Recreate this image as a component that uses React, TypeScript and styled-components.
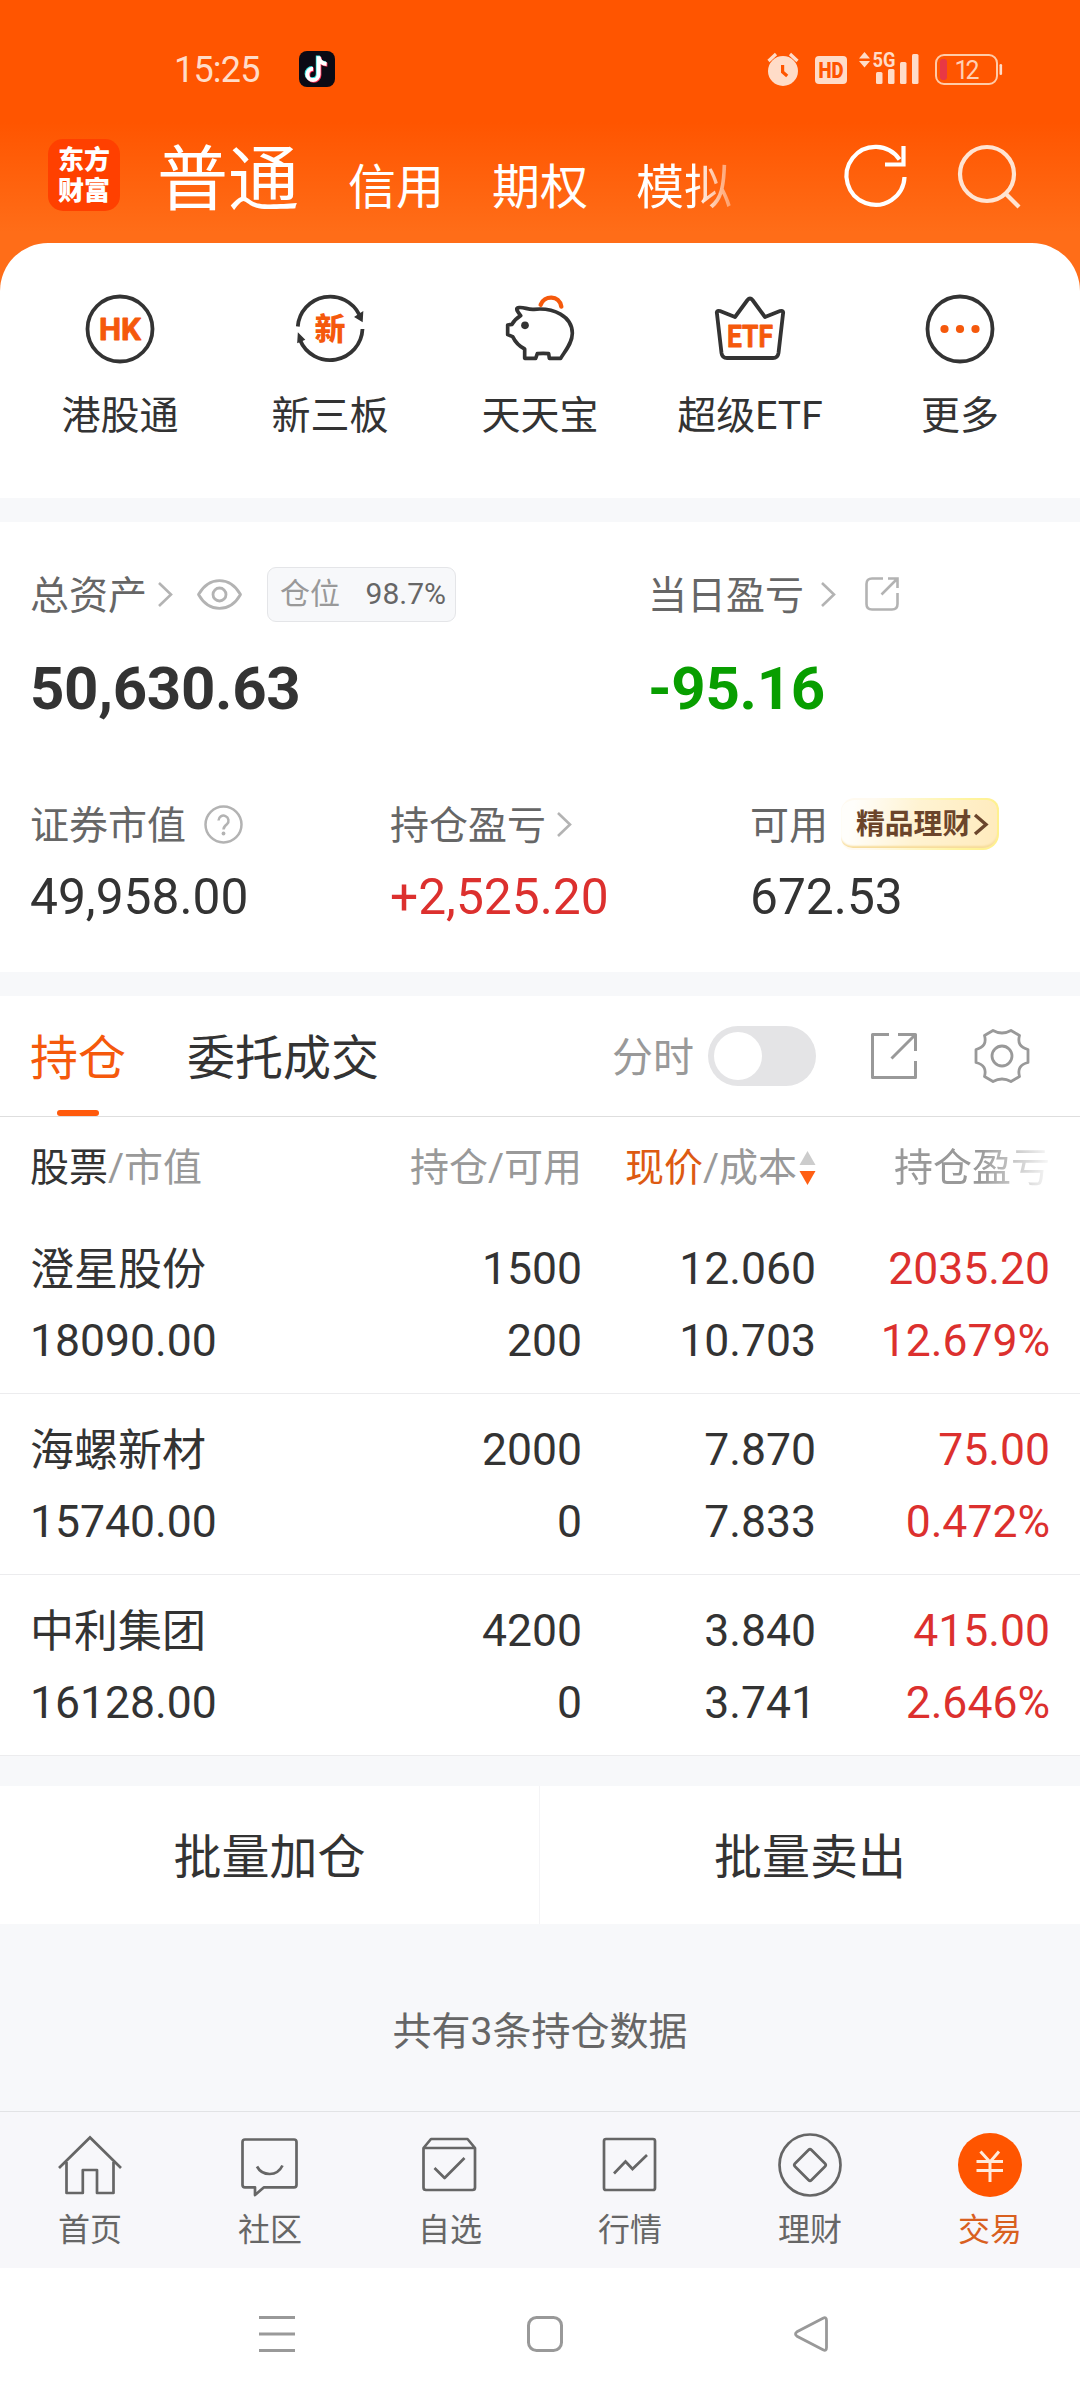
import React from 'react';
import styled, { createGlobalStyle } from 'styled-components';

const FONT = `Roboto, "Noto Sans CJK SC", sans-serif`;
const ORANGE = '#f5590c';
const RED = '#dc302e';
const DARK = '#333333';
const MID = '#666666';
const LIGHT = '#999999';
const PALE = '#b3b3b3';
const BAND = '#f7f8fa';

const GlobalStyle = createGlobalStyle`
  * { box-sizing: border-box; }
  html, body { margin: 0; padding: 0; background: #fff; }
  body { font-family: ${FONT}; color: ${DARK}; }
  svg { display: block; flex: none; overflow: visible; }
  button { font: inherit; border: 0; background: none; padding: 0; margin: 0; color: inherit; }
`;

const Screen = styled.div`
  width: 1080px;
  height: 2400px;
  display: flex;
  flex-direction: column;
  overflow: hidden;
  background: #fff;
`;

/* ---------- header ---------- */

const Hero = styled.header`
  height: 291px;
  flex: none;
  margin-bottom: -48px;
  background: linear-gradient(#ff5500 0, #ff5500 122px, #ff6d18 232px, #ff6d18 100%);
`;

const StatusBar = styled.div`
  height: 138px;
  display: flex;
  align-items: center;
  padding: 0 78px 0 174px;
  color: #ffdcc8;
`;

const Clock = styled.span`
  width: 125px;
  padding-top: 2px;
  font-size: 36px;
  line-height: 42px;
  letter-spacing: -0.8px;
`;

const StatusIcons = styled.div`
  margin-left: auto;
  display: flex;
  align-items: center;
`;

const TitleBar = styled.div`
  height: 74px;
  display: flex;
  align-items: center;
  padding: 0 60px 0 48px;
`;

const Logo = styled.div`
  width: 72px;
  height: 72px;
  flex: none;
  padding-top: 2px;
  border-radius: 15px;
  background: #ff4000;
  color: #fff;
  display: flex;
  flex-direction: column;
  align-items: center;
  justify-content: center;
  font-weight: 900;
  font-size: 26px;
  line-height: 31px;
`;

const AccountTabs = styled.nav`
  width: 580px;
  margin-left: 37px;
  padding-top: 17px;
  display: flex;
  align-items: baseline;
  color: #fff;
  white-space: nowrap;
`;

const AccountTab = styled.button<{ $active?: boolean; $fade?: boolean }>`
  font-size: ${(p) => (p.$active ? 71 : 48)}px;
  line-height: 74px;
  margin-right: ${(p) => (p.$active ? 49 : 48)}px;
  ${(p) =>
    p.$fade &&
    `background: linear-gradient(90deg, #fff 60%, rgba(255,255,255,.35) 100%);
     -webkit-background-clip: text; background-clip: text; color: transparent;`}
`;

const HeaderActions = styled.div`
  margin-left: auto;
  display: flex;
  gap: 51px;
  padding-top: 1px;
`;

/* ---------- shortcuts ---------- */

const Shortcuts = styled.section`
  height: 255px;
  flex: none;
  background: #fff;
  border-radius: 48px 48px 0 0;
  display: grid;
  grid-template-columns: repeat(5, 210px);
  padding: 51px 15px 0;
`;

const Shortcut = styled.button`
  display: flex;
  flex-direction: column;
  align-items: center;
  align-self: start;
  gap: 27px;
  font-size: 39px;
  line-height: 50px;
`;

const Band = styled.div<{ $h: number }>`
  height: ${(p) => p.$h}px;
  flex: none;
  background: ${BAND};
`;

/* ---------- assets ---------- */

const Assets = styled.section`
  height: 450px;
  flex: none;
  padding: 44px 30px 0 30px;
`;

const Totals = styled.div`
  display: grid;
  grid-template-columns: 618px 1fr;
`;

const Breakdown = styled.div`
  display: grid;
  grid-template-columns: 360px 360px 1fr;
  margin-top: 72px;
`;

const Label = styled.div`
  display: flex;
  align-items: center;
  height: 56px;
  font-size: 39px;
  line-height: 56px;
  color: ${MID};
  white-space: nowrap;
`;

const LabelText = styled.span`
  padding-top: 3px;
`;

const Slot = styled.span<{ $ml: number }>`
  margin-left: ${(p) => p.$ml}px;
  display: inline-flex;
`;

const Ratio = styled.span`
  width: 189px;
  height: 55px;
  margin-left: 25px;
  padding: 0 9px 0 12px;
  border: 1px solid #e4e5e8;
  border-radius: 9px;
  background: ${BAND};
  display: flex;
  align-items: center;
  justify-content: space-between;
  font-size: 30px;
  line-height: 50px;
  color: ${MID};

  em { font-style: normal; color: ${LIGHT}; }
`;

const BigFigure = styled.div<{ $color?: string }>`
  margin-top: 32px;
  font-size: 60px;
  font-weight: 700;
  line-height: 70px;
  letter-spacing: -0.3px;
  color: ${(p) => p.$color ?? DARK};
`;

const Figure = styled.div<{ $color?: string }>`
  margin-top: 15px;
  font-size: 49.7px;
  line-height: 60px;
  color: ${(p) => p.$color ?? DARK};
`;

const Promo = styled.span`
  width: 158px;
  height: 52px;
  margin-left: 13px;
  padding-left: 15px;
  display: flex;
  align-items: center;
  gap: 3px;
  border-radius: 14px 12px 16px 12px;
  border: 2px solid transparent;
  border-left: 0;
  background:
    linear-gradient(100deg, #fffefb 8%, #fff3d2 48%, #ffebbd 100%) padding-box,
    linear-gradient(100deg, #fffaf0 20%, #fff4a0 75%, #fff08c 100%) border-box;
  box-shadow: inset 0 -3px 2px -1px #f7dc9a;
  color: #6b452b;
  font-size: 28.8px;
  font-weight: 700;
  line-height: 48px;
`;

/* ---------- positions ---------- */

const TabsBar = styled.div`
  height: 121px;
  flex: none;
  padding: 0 51px 0 30px;
  display: flex;
  border-bottom: 1px solid #dedede;
`;

const Tab = styled.button<{ $active?: boolean }>`
  height: 120px;
  margin-right: 61px;
  display: flex;
  flex-direction: column;
  align-items: center;
  justify-content: space-between;
  font-size: 48px;
  line-height: 126px;
  color: ${(p) => (p.$active ? ORANGE : DARK)};

  &::after {
    content: '';
    flex: none;
    width: 42px;
    height: 6px;
    margin-top: -12px;
    border-radius: 3px;
    background: ${(p) => (p.$active ? '#ff5a0c' : 'transparent')};
  }
`;

const TabTools = styled.div`
  margin-left: auto;
  display: flex;
  align-items: center;
  color: ${LIGHT};
  font-size: 41px;
  line-height: 56px;
`;

const ToolText = styled.span`
  padding-top: 4px;
`;

const Toggle = styled.span`
  width: 108px;
  height: 60px;
  margin: 0 55px 0 14px;
  padding: 6px;
  border-radius: 30px;
  background: #e4e4e6;

  &::before {
    content: '';
    display: block;
    width: 48px;
    height: 48px;
    border-radius: 50%;
    background: #fff;
  }
`;

const COLUMNS = '334px 218px 234px 1fr';

const HeadRow = styled.div`
  height: 96px;
  flex: none;
  padding: 3px 30px 0 30px;
  display: grid;
  grid-template-columns: ${COLUMNS};
  align-items: center;
  font-size: 39px;
  line-height: 96px;
  color: ${LIGHT};
  white-space: nowrap;
`;

const HeadCell = styled.div<{ $right?: boolean }>`
  display: flex;
  align-items: center;
  justify-content: ${(p) => (p.$right ? 'flex-end' : 'flex-start')};
`;

const Ink = styled.span<{ $c: string }>`
  color: ${(p) => p.$c};
`;

const FadingHead = styled(HeadCell)`
  padding-left: 78px;
  mask-image: linear-gradient(90deg, #000 0, #000 70%, transparent 102%);
`;

const Row = styled.div`
  height: 181px;
  flex: none;
  padding: 20px 30px 0 30px;
  display: grid;
  grid-template-columns: ${COLUMNS};
  grid-template-rows: 72px 72px;
  border-bottom: 1px solid #ececee;
  font-size: 44.5px;
  line-height: 73px;
`;

const Cell = styled.div<{ $right?: boolean; $color?: string }>`
  text-align: ${(p) => (p.$right ? 'right' : 'left')};
  color: ${(p) => p.$color ?? DARK};
  white-space: nowrap;
`;

const StockName = styled(Cell)`
  font-size: 44px;
  line-height: 75px;
`;

const BatchBar = styled.div`
  height: 138px;
  flex: none;
  display: grid;
  grid-template-columns: 539px 541px;
`;

const BatchButton = styled.button`
  font-size: 48px;
  line-height: 138px;
  padding-top: 3px;

  & + & { border-left: 1px solid #f4f4f6; }
`;

const Summary = styled.div`
  height: 187px;
  flex: none;
  padding-top: 26px;
  background: ${BAND};
  text-align: center;
  font-size: 39px;
  line-height: 164px;
  color: ${MID};
`;

/* ---------- bottom navigation ---------- */

const BottomNav = styled.nav`
  height: 157px;
  flex: none;
  display: grid;
  grid-template-columns: repeat(6, 180px);
  padding-top: 21px;
  border-top: 1px solid #e2e3e5;
  background: #f7f7fa;
`;

const NavItem = styled.button<{ $active?: boolean }>`
  display: flex;
  flex-direction: column;
  align-items: center;
  align-self: start;
  gap: 12px;
  font-size: 32px;
  line-height: 42px;
  color: ${(p) => (p.$active ? '#d9601f' : MID)};
`;

const SystemNav = styled.div`
  height: 132px;
  flex: none;
  padding: 0 252px 0 259px;
  display: flex;
  align-items: center;
  justify-content: space-between;
`;

/* ---------- drawings ---------- */

const TikTok = () => (
  <svg width="36" height="36" viewBox="0 0 36 36">
    <rect width="36" height="36" rx="8" fill="#0b0a14" />
    <g fill="none" strokeWidth="4">
      <path d="M18.800 4.500v18.200a5.600 5.600 0 1 1-5.600-5.600M18.800 5c.6 4.200 3.600 7 8 7.200" stroke="#35e6e0" />
      <path d="M20.400 6v18.200a5.600 5.600 0 1 1-5.600-5.600M20.400 6.500c.6 4.200 3.600 7 8 7.200" stroke="#ff2c56" />
      <path d="M19.600 5.200v18.200a5.600 5.600 0 1 1-5.600-5.600M19.600 5.700c.6 4.200 3.600 7 8 7.200" stroke="#fff" />
    </g>
  </svg>
);

const StatusGlyphs = () => (
  <svg width="236" height="36" viewBox="766 50 236 36">
    <g fill="#ffdcc8">
      <circle cx="783" cy="70" r="15" />
      <path d="M768.500 60l7.500-7M797.500 60l-7.500-7" stroke="#ffdcc8" strokeWidth="3.200" />
      <path d="M782.600 64v7l4.600 4" stroke="#ff5500" strokeWidth="3.200" fill="none" />
      <rect x="815" y="55" width="32" height="28" rx="4" />
      <text x="831" y="77" fontSize="22.500" fontWeight="900" fill="#ff5500" textAnchor="middle" textLength="25" lengthAdjust="spacingAndGlyphs">HD</text>
      <path d="M864.500 51l5.500 6.500h-11zM864.500 66.500l5.500-6.500h-11z" />
      <text x="872.500" y="66" fontSize="20.500" fontWeight="700" textLength="23" lengthAdjust="spacingAndGlyphs">5G</text>
      <rect x="876" y="71" width="6.500" height="12" rx="1.500" />
      <rect x="888" y="68" width="6.500" height="15" rx="1.500" />
      <rect x="900" y="61" width="6.500" height="22" rx="1.500" />
      <rect x="912" y="53" width="6.500" height="30" rx="1.500" />
      <rect x="999.500" y="63" width="2.600" height="11" rx="1.300" />
      <text x="967" y="78" fontSize="25" textAnchor="middle" textLength="25" fill="#ffcfb4">12</text>
    </g>
    <rect x="936" y="54" width="61" height="29" rx="8" fill="none" stroke="#ffcba8" strokeWidth="2" />
    <rect x="940" y="58" width="7" height="21" rx="3" fill="#e83845" />
  </svg>
);

const RefreshIcon = () => (
  <svg width="62" height="64" viewBox="0 0 62 64" fill="none" stroke="#fff" strokeWidth="4.200">
    <path d="M59.500 33a29 29 0 1 1-5-17.500" />
    <path d="M58.500 2v18.500H40" />
  </svg>
);

const SearchIcon = () => (
  <svg width="62" height="64" viewBox="0 0 62 64" fill="none" stroke="#ffe4d2" strokeWidth="4.200">
    <circle cx="29" cy="30" r="27" />
    <path d="M47 49l14 14" />
  </svg>
);

const roundIcon = { width: 70, height: 70, viewBox: '0 0 70 70', fill: 'none', stroke: DARK, strokeWidth: 3.8 };

const HkIcon = () => (
  <svg {...roundIcon}>
    <circle cx="35" cy="35" r="32.500" />
    <text x="35" y="46.300" fontSize="32" fontWeight="700" fill={ORANGE} stroke={ORANGE} strokeWidth="0.900" strokeLinejoin="round" textAnchor="middle" textLength="42" lengthAdjust="spacingAndGlyphs">HK</text>
  </svg>
);

const NewBoardIcon = () => (
  <svg {...roundIcon}>
    <path d="M2.800 32.500A32.500 32.500 0 0 1 64.500 21" />
    <path d="M67.500 35A32.500 32.500 0 0 1 5 46" />
    <path d="M60.500 23l7-4.500-.5 8.500zM3 48l.5-8 5.500 5.500z" fill={DARK} strokeWidth="1.500" />
    <text x="35" y="46" fontSize="31" fontWeight="900" fill={ORANGE} stroke="none" textAnchor="middle">新</text>
  </svg>
);

const PiggyIcon = () => (
  <svg width="70" height="70" viewBox="45 42 210 210" fill="none" strokeLinejoin="round" strokeLinecap="round">
    <path
      d="M92 107C80 92 76 84 86 83C100 80 115 90 132 88C190 82 247 108 247 160C247 190 225 213 212 235H178L176 221Q160 219 142 221L137 235H104V207Q80 195 68 170L53 164V135L66 133Q74 118 92 107"
      stroke={DARK}
      strokeWidth="11"
    />
    <path d="M152 74C162 46 208 44 214 80" stroke={ORANGE} strokeWidth="13" />
    <circle cx="105" cy="136" r="11.500" fill={DARK} />
  </svg>
);

const EtfIcon = () => (
  <svg {...roundIcon} strokeLinejoin="round">
    <path d="M2 20Q1 16 5 17L20 23 32.500 6Q35 3 37.500 6L50 23 65 17Q69 16 68 20L63.500 59Q62.800 64 58 64H12Q7.200 64 6.500 59Z" />
    <text x="35" y="52.500" fontSize="32" fontWeight="700" fill={ORANGE} stroke={ORANGE} strokeWidth="0.800" textAnchor="middle" textLength="46" lengthAdjust="spacingAndGlyphs">ETF</text>
  </svg>
);

const MoreIcon = () => (
  <svg {...roundIcon}>
    <circle cx="35" cy="35" r="32.500" />
    <g fill={ORANGE} stroke="none">
      <circle cx="19.500" cy="35" r="4.100" />
      <circle cx="35" cy="35" r="4.100" />
      <circle cx="50.500" cy="35" r="4.100" />
    </g>
  </svg>
);

const Chevron = ({ w = 15, h = 25, color = PALE, sw = 2.6 }) => (
  <svg width={w} height={h} viewBox={`0 0 ${w} ${h}`} fill="none" stroke={color} strokeWidth={sw}>
    <path d={`M1 1L${w - 2} ${h / 2}L1 ${h - 1}`} />
  </svg>
);

const EyeIcon = () => (
  <svg width="45" height="31" viewBox="0 0 45 31" fill="none" stroke={PALE} strokeWidth="2.800">
    <path d="M1.500 15.500C12-3 33-3 43.500 15.500C33 34 12 34 1.500 15.500Z" strokeLinejoin="round" />
    <circle cx="22.500" cy="15.500" r="6.500" />
  </svg>
);

const OpenIcon = () => (
  <svg width="34" height="34" viewBox="0 0 34 34" fill="none" stroke={PALE} strokeWidth="2.600">
    <path d="M18 1.500H7Q1.500 1.500 1.500 7V27Q1.500 32.500 7 32.500H27Q32.500 32.500 32.500 27V16" />
    <path d="M23 1.500H32.500V11M16.500 17.500L32 2" />
  </svg>
);

const HelpIcon = () => (
  <svg width="39" height="39" viewBox="0 0 39 39" fill="none" stroke={PALE} strokeWidth="2.500">
    <circle cx="19.500" cy="19.500" r="18" />
    <path d="M14.500 15.500a5 5 0 1 1 8.500 3.700c-2.200 1.800-3.500 2.800-3.500 5.300" />
    <circle cx="19.500" cy="28.500" r="1.900" fill={PALE} stroke="none" />
  </svg>
);

const ExportIcon = () => (
  <svg width="46" height="46" viewBox="0 0 46 46" fill="none" stroke={LIGHT} strokeWidth="3" strokeLinejoin="round">
    <path d="M18 1.500H1.500V44.500H44.500V28" />
    <path d="M27 1.500H44.500V18M20.500 25.500L43.500 2.500" />
  </svg>
);

const GearIcon = () => (
  <svg width="54" height="54" viewBox="-27 -27 54 54" fill="none" stroke={LIGHT} strokeWidth="2.800" strokeLinejoin="round">
    <path d="M-9-25.500Q0-20.500 9-25.500L17.500-20.500C15.500-13 18-8.500 26-6.500V6.500C18 8.500 15.500 13 17.500 20.500L9 25.500Q0 20.500-9 25.500L-17.500 20.500C-15.500 13-18 8.500-26 6.500V-6.500C-18-8.500-15.500-13-17.500-20.500Z" />
    <circle r="10" />
  </svg>
);

const SortIcon = () => (
  <svg width="17" height="34" viewBox="0 0 17 34">
    <path d="M8.500 0L16.500 14H0.500Z" fill="#cccccc" />
    <path d="M8.500 34L16.500 20H0.500Z" fill="#ff5f14" />
  </svg>
);

const navIcon = { width: 64, height: 64, viewBox: '0 0 64 64', fill: 'none', stroke: MID, strokeWidth: 2.7 };

const HomeIcon = () => (
  <svg {...navIcon}>
    <path d="M1 35L32 4.500 63 35" />
    <path d="M8.500 29V60H24.800V37H39V60H55.500V29" strokeLinejoin="round" />
  </svg>
);

const ChatIcon = () => (
  <svg {...navIcon} strokeLinejoin="round">
    <path d="M7 6.500H56Q58.500 6.500 58.500 9V52Q58.500 54.300 56 54.300H26L17 62V54.300H7Q4.500 54.300 4.500 52V9Q4.500 6.500 7 6.500Z" />
    <path d="M19 33.500Q23 41 31.700 41T44.500 32.500" />
  </svg>
);

const PickIcon = () => (
  <svg {...navIcon} strokeLinejoin="round">
    <path d="M5.500 15L13 6H49.500L57 15V54.500Q57 57 54.500 57H8Q5.500 57 5.500 54.500ZM5.500 15H57" />
    <path d="M16.500 35L26.600 45 46.500 25" />
  </svg>
);

const MarketIcon = () => (
  <svg {...navIcon}>
    <rect x="6" y="6" width="51" height="51" rx="2" />
    <path d="M16 40.500L27.500 28.500 34.500 36 49 22" />
  </svg>
);

const WealthIcon = () => (
  <svg {...navIcon} strokeLinejoin="round">
    <circle cx="32" cy="32" r="30.500" />
    <path d="M30.500 17Q32 15.500 33.500 17L47 30.500Q48.500 32 47 33.500L33.500 47Q32 48.500 30.500 47L17 33.500Q15.500 32 17 30.500Z" />
  </svg>
);

/* Yuan mark: two arms, a stem and two bars */
const TradeIcon = () => (
  <svg {...navIcon} strokeWidth={3}>
    <circle cx="32" cy="32" r="32" fill="#ff5500" stroke="none" />
    <path d="M22.500 18.500L32 29 41 18.500M32 29V49M18.500 28.500H45M18.500 37.500H45" stroke="#ffeada" />
  </svg>
);

const MenuKey = () => (
  <svg width="36" height="36" viewBox="0 0 36 36" stroke={LIGHT} strokeWidth="3">
    <path d="M0 1.500H36M0 18H36M0 34.500H36" />
  </svg>
);

const HomeKey = () => (
  <svg width="36" height="36" viewBox="0 0 36 36" fill="none" stroke={LIGHT} strokeWidth="3">
    <rect x="1.500" y="1.500" width="33" height="33" rx="8" />
  </svg>
);

const BackKey = () => (
  <svg width="34" height="36" viewBox="0 0 34 36" fill="none" stroke={LIGHT} strokeWidth="2.800">
    <path d="M29 2.300Q32.500 0.500 32.500 4.500V31.500Q32.500 35.500 29 33.700L3 20.200Q0 18 3 15.800Z" />
  </svg>
);

/* ---------- data ---------- */

const shortcuts = [
  { label: '港股通', Icon: HkIcon },
  { label: '新三板', Icon: NewBoardIcon },
  { label: '天天宝', Icon: PiggyIcon },
  { label: '超级ETF', Icon: EtfIcon },
  { label: '更多', Icon: MoreIcon },
];

const positions = [
  { name: '澄星股份', value: '18090.00', held: '1500', free: '200', price: '12.060', cost: '10.703', gain: '2035.20', pct: '12.679%' },
  { name: '海螺新材', value: '15740.00', held: '2000', free: '0', price: '7.870', cost: '7.833', gain: '75.00', pct: '0.472%' },
  { name: '中利集团', value: '16128.00', held: '4200', free: '0', price: '3.840', cost: '3.741', gain: '415.00', pct: '2.646%' },
];

const navItems = [
  { label: '首页', Icon: HomeIcon },
  { label: '社区', Icon: ChatIcon },
  { label: '自选', Icon: PickIcon },
  { label: '行情', Icon: MarketIcon },
  { label: '理财', Icon: WealthIcon },
  { label: '交易', Icon: TradeIcon, active: true },
];

export default function App() {
  return (
    <Screen>
      <GlobalStyle />
      <Hero>
        <StatusBar>
          <Clock>15:25</Clock>
          <TikTok />
          <StatusIcons>
            <StatusGlyphs />
          </StatusIcons>
        </StatusBar>
        <TitleBar>
          <Logo>
            <span>东方</span>
            <span>财富</span>
          </Logo>
          <AccountTabs>
            <AccountTab $active>普通</AccountTab>
            <AccountTab>信用</AccountTab>
            <AccountTab>期权</AccountTab>
            <AccountTab $fade>模拟</AccountTab>
          </AccountTabs>
          <HeaderActions>
            <RefreshIcon />
            <SearchIcon />
          </HeaderActions>
        </TitleBar>
      </Hero>

      <Shortcuts>
        {shortcuts.map(({ label, Icon }) => (
          <Shortcut key={label}>
            <Icon />
            {label}
          </Shortcut>
        ))}
      </Shortcuts>
      <Band $h={24} />

      <Assets>
        <Totals>
          <div>
            <Label>
              <LabelText>总资产</LabelText>
              <Slot $ml={11}><Chevron /></Slot>
              <Slot $ml={24}><EyeIcon /></Slot>
              <Ratio>
                <em>仓位</em>
                98.7%
              </Ratio>
            </Label>
            <BigFigure>50,630.63</BigFigure>
          </div>
          <div>
            <Label>
              <LabelText>当日盈亏</LabelText>
              <Slot $ml={17}><Chevron /></Slot>
              <Slot $ml={29}><OpenIcon /></Slot>
            </Label>
            <BigFigure $color="#089e00">-95.16</BigFigure>
          </div>
        </Totals>
        <Breakdown>
          <div>
            <Label>
              <LabelText>证券市值</LabelText>
              <Slot $ml={18}><HelpIcon /></Slot>
            </Label>
            <Figure>49,958.00</Figure>
          </div>
          <div>
            <Label>
              <LabelText>持仓盈亏</LabelText>
              <Slot $ml={11}><Chevron /></Slot>
            </Label>
            <Figure $color={RED}>+2,525.20</Figure>
          </div>
          <div>
            <Label>
              <LabelText>可用</LabelText>
              <Promo>
                精品理财
                <Chevron w={14} h={21} color="#6b452b" sw={3.4} />
              </Promo>
            </Label>
            <Figure>672.53</Figure>
          </div>
        </Breakdown>
      </Assets>
      <Band $h={24} />

      <TabsBar>
        <Tab $active>持仓</Tab>
        <Tab>委托成交</Tab>
        <TabTools>
          <ToolText>分时</ToolText>
          <Toggle />
          <ExportIcon />
          <Slot $ml={58}><GearIcon /></Slot>
        </TabTools>
      </TabsBar>

      <HeadRow>
        <HeadCell>
          <Ink $c={DARK}>股票</Ink>/市值
        </HeadCell>
        <HeadCell $right>持仓/可用</HeadCell>
        <HeadCell $right>
          <Ink $c="#dd5a12">现价</Ink>/成本
          <Slot $ml={2}><SortIcon /></Slot>
        </HeadCell>
        <FadingHead>持仓盈亏</FadingHead>
      </HeadRow>
      {positions.map((p) => (
        <Row key={p.name}>
          <StockName>{p.name}</StockName>
          <Cell $right>{p.held}</Cell>
          <Cell $right>{p.price}</Cell>
          <Cell $right $color={RED}>{p.gain}</Cell>
          <Cell>{p.value}</Cell>
          <Cell $right>{p.free}</Cell>
          <Cell $right>{p.cost}</Cell>
          <Cell $right $color={RED}>{p.pct}</Cell>
        </Row>
      ))}
      <Band $h={30} />

      <BatchBar>
        <BatchButton>批量加仓</BatchButton>
        <BatchButton>批量卖出</BatchButton>
      </BatchBar>
      <Summary>共有3条持仓数据</Summary>

      <BottomNav>
        {navItems.map(({ label, Icon, active }) => (
          <NavItem key={label} $active={active}>
            <Icon />
            {label}
          </NavItem>
        ))}
      </BottomNav>
      <SystemNav>
        <MenuKey />
        <HomeKey />
        <BackKey />
      </SystemNav>
    </Screen>
  );
}
